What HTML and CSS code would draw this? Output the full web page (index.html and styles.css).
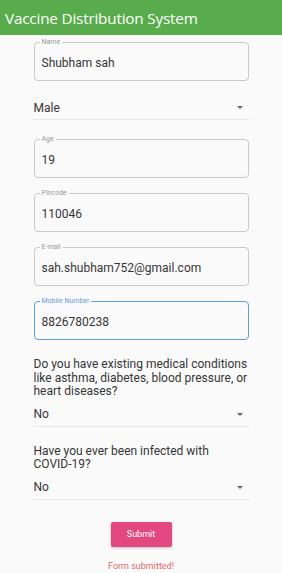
FILE: index.html
```html
<!DOCTYPE html>
<html lang="en">

<head>
    <meta charset="UTF-8">
    <meta name="viewport" content="width=device-width, initial-scale=1.0">
    <title>Vaccine Distribution System</title>
    <link rel="stylesheet" href="styles.css">
</head>

<body>
    <header class="app-bar">
        <h1>Vaccine Distribution System</h1>
    </header>

    <form class="vaccine-form">
        <div class="field">
            <span class="field-label">Name</span>
            <span class="field-value">Shubham sah</span>
        </div>

        <div class="select first-select">
            <span>Male</span>
            <span class="arrow"></span>
        </div>

        <div class="field">
            <span class="field-label">Age</span>
            <span class="field-value">19</span>
        </div>

        <div class="field">
            <span class="field-label">Pincode</span>
            <span class="field-value">110046</span>
        </div>

        <div class="field">
            <span class="field-label">E-mail</span>
            <span class="field-value">sah.shubham752@gmail.com</span>
        </div>

        <div class="field focused">
            <span class="field-label">Mobile Number</span>
            <span class="field-value">8826780238</span>
        </div>

        <p class="question">Do you have existing medical conditions like asthma, diabetes, blood pressure, or heart diseases?</p>
        <div class="select">
            <span>No</span>
            <span class="arrow"></span>
        </div>

        <p class="question second">Have you ever been infected with COVID-19?</p>
        <div class="select">
            <span>No</span>
            <span class="arrow"></span>
        </div>

        <div class="actions">
            <button type="button" class="submit-btn">Submit</button>
            <p class="message">Form submitted!</p>
        </div>
    </form>
</body>

</html>
```

FILE: styles.css
```css
body {
    margin: 0;
    padding: 0;
    background-color: #fafafa;
    font-family: Roboto, "Liberation Sans", sans-serif;
    color: #363636;
}

.app-bar {
    height: 35px;
    background-color: #58ac4b;
    display: flex;
    align-items: center;
    padding: 0 5px;
}

.app-bar h1 {
    margin: 0;
    color: #fff;
    font-family: "Open Sans", sans-serif;
    font-size: 15.3px;
    font-weight: normal;
    letter-spacing: -0.2px;
}

.vaccine-form {
    width: 215px;
    margin: 0 auto;
    padding-top: 7px;
}

.field {
    position: relative;
    height: 37px;
    border: 1px solid #c9c9c9;
    border-radius: 4px;
    display: flex;
    align-items: center;
    padding: 0 7px;
    margin-bottom: 15px;
}

.field-label {
    position: absolute;
    top: -5px;
    left: 5px;
    padding: 0 2px;
    background-color: #fafafa;
    font-size: 7px;
    line-height: 9px;
    color: #999;
}

.field-value {
    font-size: 12px;
    padding-top: 2px;
}

.field.focused {
    border: 1.5px solid #5d9ee3;
}

.field.focused .field-label {
    color: #5d9ee3;
}

.select {
    height: 23px;
    display: flex;
    align-items: center;
    justify-content: space-between;
    border-bottom: 1px solid #e6e6e6;
    font-size: 12px;
    padding-right: 6px;
}

.first-select {
    margin-bottom: 19px;
}

.arrow {
    width: 0;
    height: 0;
    border-left: 3.5px solid transparent;
    border-right: 3.5px solid transparent;
    border-top: 3.5px solid #666;
}

.question {
    margin: 0 0 4px;
    padding-top: 3px;
    font-size: 12px;
    line-height: 13.5px;
}

.question.second {
    margin-top: 18px;
    padding-top: 0;
}

.actions {
    display: flex;
    flex-direction: column;
    align-items: center;
    padding-top: 22px;
}

.submit-btn {
    width: 61px;
    height: 25px;
    background-color: #e2477f;
    color: #fff;
    border: none;
    border-radius: 2px;
    font-family: Roboto, sans-serif;
    font-size: 9px;
    box-shadow: 0 1px 3px rgba(0, 0, 0, 0.25);
}

.message {
    margin: 14px 0 0;
    font-size: 9px;
    color: #e0696b;
}
```
